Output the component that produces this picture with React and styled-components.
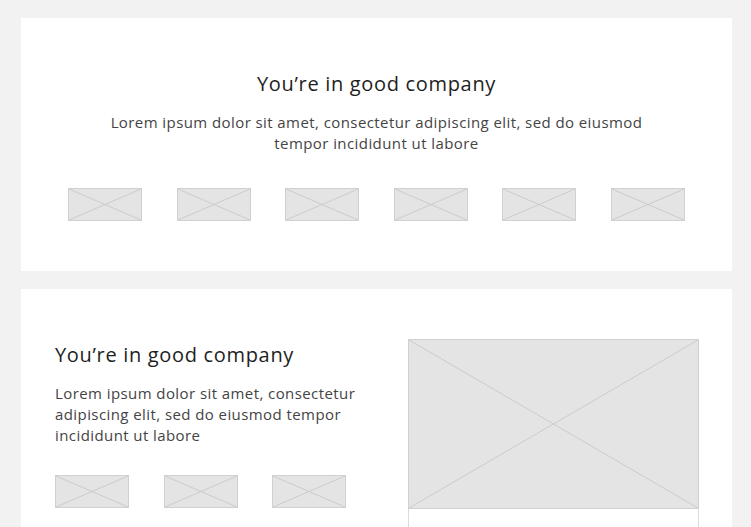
import styled, { createGlobalStyle } from "styled-components";

const GlobalStyle = createGlobalStyle`
  body {
    margin: 0;
    background: #f2f2f2;
    font-family: "Open Sans", "Liberation Sans", sans-serif;
  }
`;

const Page = styled.div`
  display: flex;
  flex-direction: column;
  gap: 18px;
  padding: 18px 19px 0 21px;
`;

const Card = styled.section`
  background: #ffffff;
  padding: ${(p) => p.$pad};
`;

const Heading = styled.h2`
  margin: 0;
  font-size: 20px;
  line-height: 24px;
  font-weight: 400;
  letter-spacing: 0.68px;
  color: #1e1e1e;
  text-align: ${(p) => (p.$center ? "center" : "left")};
`;

const Text = styled.p`
  margin: 16px 0 0;
  padding: ${(p) => (p.$center ? "0 60px" : "0")};
  font-size: 15px;
  line-height: 21px;
  letter-spacing: 0.42px;
  color: #444444;
  text-align: ${(p) => (p.$center ? "center" : "left")};
`;

const LogoRow = styled.div`
  display: flex;
  justify-content: ${(p) => (p.$spread ? "space-between" : "flex-start")};
  gap: 34.5px;
  margin-top: ${(p) => p.$top}px;
  padding: ${(p) => (p.$spread ? "0 27px" : "0")};
`;

const Split = styled.div`
  display: grid;
  grid-template-columns: 1fr 291px;
  gap: 30px;
`;

const TextColumn = styled.div`
  padding-top: 4px;
`;

const ImageCard = styled.div`
  display: flex;
  flex-direction: column;
`;

const ImageFrame = styled.div`
  border: 1px solid #dcdcdc;
  border-top: 0;
  height: 240px;
`;

const PlaceholderBox = styled.div`
  width: ${(p) => p.$w}px;
  height: ${(p) => p.$h}px;
  background: #e4e4e4;
  border: 1px solid #d0d0d0;
  box-sizing: border-box;
  flex-shrink: 0;

  svg {
    display: block;
    width: 100%;
    height: 100%;
  }
`;

function Placeholder({ w, h }) {
  return (
    <PlaceholderBox $w={w} $h={h}>
      <svg viewBox="0 0 100 100" preserveAspectRatio="none">
        <line x1="0" y1="0" x2="100" y2="100" stroke="#cbcbcb" strokeWidth="1" vectorEffect="non-scaling-stroke" />
        <line x1="100" y1="0" x2="0" y2="100" stroke="#cbcbcb" strokeWidth="1" vectorEffect="non-scaling-stroke" />
      </svg>
    </PlaceholderBox>
  );
}

const lorem = "Lorem ipsum dolor sit amet, consectetur adipiscing elit, sed do eiusmod tempor incididunt ut labore";

export default function App() {
  return (
    <>
      <GlobalStyle />
      <Page>
        <Card $pad="54px 20px 50px">
          <Heading $center>You’re in good company</Heading>
          <Text $center>{lorem}</Text>
          <LogoRow $spread $top={34}>
            {[0, 1, 2, 3, 4, 5].map((i) => (
              <Placeholder key={i} w={74} h={33} />
            ))}
          </LogoRow>
        </Card>
        <Card $pad="50px 33px 0 34px">
          <Split>
            <TextColumn>
              <Heading>You’re in good company</Heading>
              <Text>{lorem}</Text>
              <LogoRow $top={29}>
                {[0, 1, 2].map((i) => (
                  <Placeholder key={i} w={74} h={33} />
                ))}
              </LogoRow>
            </TextColumn>
            <ImageCard>
              <Placeholder w={291} h={170} />
              <ImageFrame />
            </ImageCard>
          </Split>
        </Card>
      </Page>
    </>
  );
}
